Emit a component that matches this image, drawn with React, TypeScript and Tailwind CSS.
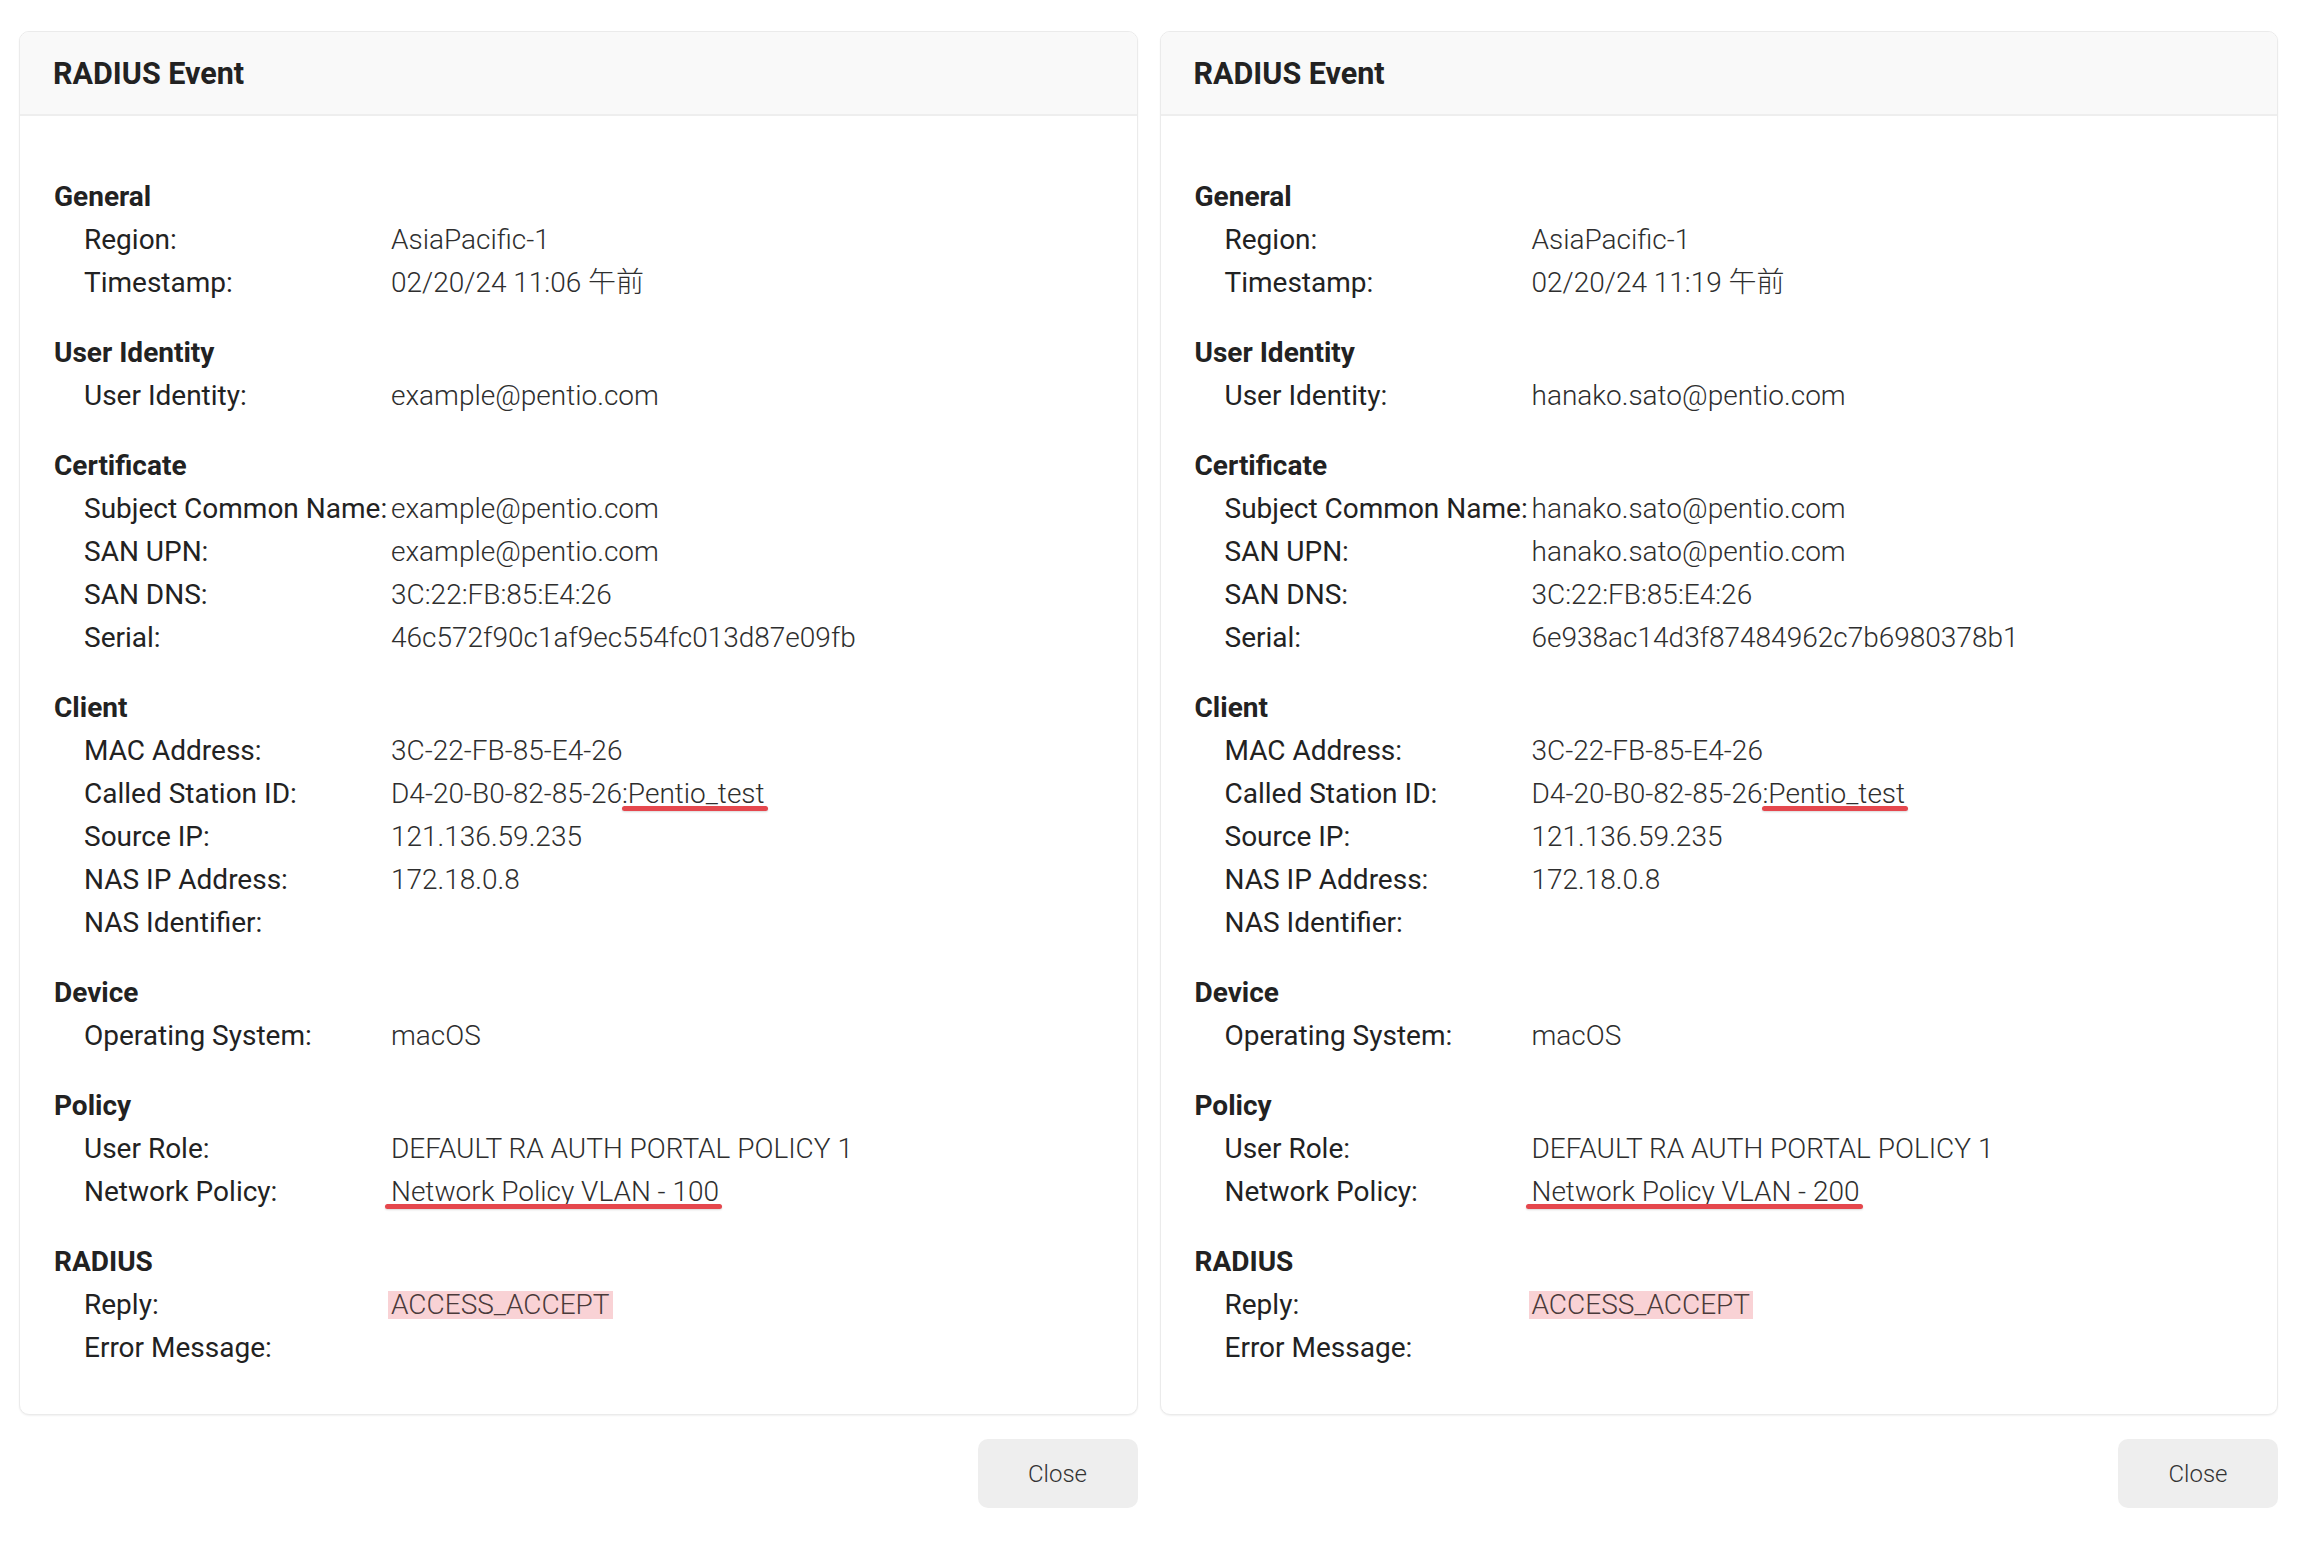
import React from 'react'

type Row = { label: string; value?: React.ReactNode }
type Section = { title: string; rows: Row[] }

const Marked: React.FC<{ children: React.ReactNode }> = ({ children }) => (
  <span className="relative">
    {children}
    <span className="absolute left-[-6px] right-[-3px] top-[29px] h-[5px] rounded-full bg-[#e5474d] shadow-[0_1px_2px_rgba(0,0,0,0.15)]" />
  </span>
)

const Reply: React.FC<{ children: React.ReactNode }> = ({ children }) => (
  <span className="-ml-[3px] inline-block bg-[#f9d2d5] px-[3px] leading-[28px] text-[#4a3a3a]">{children}</span>
)

const buildSections = (ev: {
  time: string
  user: string
  serial: string
  vlan: string
}): Section[] => [
  {
    title: 'General',
    rows: [
      { label: 'Region:', value: 'AsiaPacific-1' },
      { label: 'Timestamp:', value: `02/20/24 ${ev.time} 午前` },
    ],
  },
  {
    title: 'User Identity',
    rows: [{ label: 'User Identity:', value: ev.user }],
  },
  {
    title: 'Certificate',
    rows: [
      { label: 'Subject Common Name:', value: ev.user },
      { label: 'SAN UPN:', value: ev.user },
      { label: 'SAN DNS:', value: '3C:22:FB:85:E4:26' },
      { label: 'Serial:', value: ev.serial },
    ],
  },
  {
    title: 'Client',
    rows: [
      { label: 'MAC Address:', value: '3C-22-FB-85-E4-26' },
      {
        label: 'Called Station ID:',
        value: (
          <>
            D4-20-B0-82-85-26:<Marked>Pentio_test</Marked>
          </>
        ),
      },
      { label: 'Source IP:', value: '121.136.59.235' },
      { label: 'NAS IP Address:', value: '172.18.0.8' },
      { label: 'NAS Identifier:' },
    ],
  },
  {
    title: 'Device',
    rows: [{ label: 'Operating System:', value: 'macOS' }],
  },
  {
    title: 'Policy',
    rows: [
      { label: 'User Role:', value: 'DEFAULT RA AUTH PORTAL POLICY 1' },
      { label: 'Network Policy:', value: <Marked>{`Network Policy VLAN - ${ev.vlan}`}</Marked> },
    ],
  },
  {
    title: 'RADIUS',
    rows: [
      { label: 'Reply:', value: <Reply>ACCESS_ACCEPT</Reply> },
      { label: 'Error Message:' },
    ],
  },
]

const EventPanel: React.FC<{ sections: Section[] }> = ({ sections }) => (
  <div className="flex flex-1 flex-col">
    <div className="overflow-hidden rounded-[10px] border-[1.5px] border-[#ebebeb] bg-white shadow-[0_1px_2px_rgba(0,0,0,0.06)]">
      <div className="flex h-[84px] items-center border-b-2 border-[#eeeeee] bg-[#f9f9f9] px-[33px] pt-[1px]">
        <h2 className="text-[30.5px] font-bold text-[#222]">RADIUS Event</h2>
      </div>
      <div className="flex flex-col gap-[27px] pl-[34px] pr-[34px] pt-[59px] pb-[45px]">
        {sections.map(section => (
          <div key={section.title} className="flex flex-col">
            <div className="h-[43px] text-[28px] font-bold leading-[43px] text-[#222]">{section.title}</div>
            {section.rows.map(row => (
              <div key={row.label} className="flex h-[43px] pl-[30px] text-[28px] leading-[43px]">
                <div className="w-[307px] shrink-0 whitespace-nowrap text-[#222]">{row.label}</div>
                <div className="whitespace-nowrap font-light text-[#2e2e2e]">{row.value}</div>
              </div>
            ))}
          </div>
        ))}
      </div>
    </div>
    <div className="flex justify-end pt-[24px]">
      <button className="h-[69px] w-[160px] rounded-[10px] bg-[#eeeeee] text-[24px] font-light text-[#333]">Close</button>
    </div>
  </div>
)

export default function App() {
  const left = buildSections({
    time: '11:06',
    user: 'example@pentio.com',
    serial: '46c572f90c1af9ec554fc013d87e09fb',
    vlan: '100',
  })
  const right = buildSections({
    time: '11:19',
    user: 'hanako.sato@pentio.com',
    serial: '6e938ac14d3f87484962c7b6980378b1',
    vlan: '200',
  })

  return (
    <div
      className="min-h-[1556px] bg-white"
      style={{ fontFamily: 'Roboto, "Noto Sans CJK JP", sans-serif' }}
    >
      <div className="flex gap-[22px] pl-[19px] pr-[20px] pt-[31px]">
        <EventPanel sections={left} />
        <EventPanel sections={right} />
      </div>
    </div>
  )
}
